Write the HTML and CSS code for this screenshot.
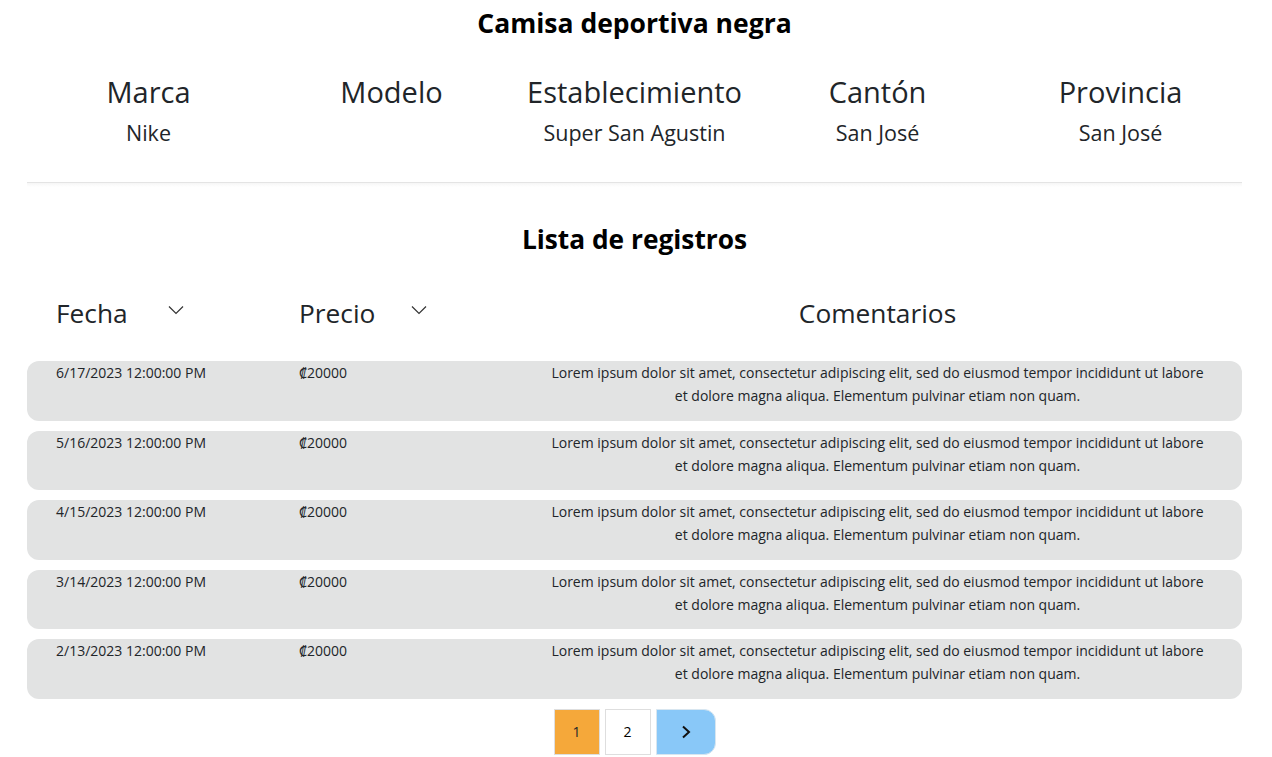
FILE: index.html
```html
<!DOCTYPE html>
<html lang="es">
<head>
<meta charset="utf-8">
<title>Camisa deportiva negra</title>
<link rel="stylesheet" href="styles.css">
</head>
<body>
<main class="page">
  <h1 class="title">Camisa deportiva negra</h1>
  <section class="info">
    <div class="info-col"><h2 class="info-label">Marca</h2><p class="info-value">Nike</p></div>
    <div class="info-col"><h2 class="info-label">Modelo</h2><p class="info-value"></p></div>
    <div class="info-col"><h2 class="info-label">Establecimiento</h2><p class="info-value">Super San Agustin</p></div>
    <div class="info-col"><h2 class="info-label">Cantón</h2><p class="info-value">San José</p></div>
    <div class="info-col"><h2 class="info-label">Provincia</h2><p class="info-value">San José</p></div>
  </section>
  <hr class="divider">
  <h1 class="title title-list">Lista de registros</h1>
  <div class="table-head">
    <div class="th th-sort"><span>Fecha</span><svg class="chev" width="16" height="10" viewBox="0 0 16 10"><path d="M1 1.5 L8 8.5 L15 1.5" fill="none" stroke="#333" stroke-width="1.2"/></svg></div>
    <div class="th th-sort"><span>Precio</span><svg class="chev" width="16" height="10" viewBox="0 0 16 10"><path d="M1 1.5 L8 8.5 L15 1.5" fill="none" stroke="#333" stroke-width="1.2"/></svg></div>
    <div class="th th-center">Comentarios</div>
  </div>
  <div class="rows">
    <div class="row"><div class="cell">6/17/2023 12:00:00 PM</div><div class="cell">₡20000</div><div class="cell cell-comment">Lorem ipsum dolor sit amet, consectetur adipiscing elit, sed do eiusmod tempor incididunt ut labore et dolore magna aliqua. Elementum pulvinar etiam non quam.</div></div>
    <div class="row"><div class="cell">5/16/2023 12:00:00 PM</div><div class="cell">₡20000</div><div class="cell cell-comment">Lorem ipsum dolor sit amet, consectetur adipiscing elit, sed do eiusmod tempor incididunt ut labore et dolore magna aliqua. Elementum pulvinar etiam non quam.</div></div>
    <div class="row"><div class="cell">4/15/2023 12:00:00 PM</div><div class="cell">₡20000</div><div class="cell cell-comment">Lorem ipsum dolor sit amet, consectetur adipiscing elit, sed do eiusmod tempor incididunt ut labore et dolore magna aliqua. Elementum pulvinar etiam non quam.</div></div>
    <div class="row"><div class="cell">3/14/2023 12:00:00 PM</div><div class="cell">₡20000</div><div class="cell cell-comment">Lorem ipsum dolor sit amet, consectetur adipiscing elit, sed do eiusmod tempor incididunt ut labore et dolore magna aliqua. Elementum pulvinar etiam non quam.</div></div>
    <div class="row"><div class="cell">2/13/2023 12:00:00 PM</div><div class="cell">₡20000</div><div class="cell cell-comment">Lorem ipsum dolor sit amet, consectetur adipiscing elit, sed do eiusmod tempor incididunt ut labore et dolore magna aliqua. Elementum pulvinar etiam non quam.</div></div>
  </div>
  <nav class="pager">
    <span class="page-btn page-active">1</span>
    <span class="page-btn">2</span>
    <span class="page-btn page-next"><svg width="12" height="14" viewBox="0 0 12 14"><path d="M3 1.5 L9 7 L3 12.5" fill="none" stroke="#111" stroke-width="2"/></svg></span>
  </nav>
</main>
</body>
</html>
```
FILE: styles.css
```css
* { box-sizing: border-box; }
body {
  margin: 0;
  background: #fff;
  font-family: "Open Sans", "Noto Sans", sans-serif;
  color: #212529;
}
.page {
  margin-left: 27px;
  width: 1215px;
}
.title {
  margin: 0;
  padding-top: 5px;
  height: 57px;
  text-align: center;
  font-size: 26.5px;
  font-weight: 700;
  line-height: 36px;
  color: #000;
}
.info {
  display: grid;
  grid-template-columns: repeat(5, 1fr);
  height: 125px;
}
.info-col { text-align: center; }
.info-label {
  margin: 0;
  font-size: 29px;
  font-weight: 500;
  line-height: 44px;
  padding-top: 13px;
}
.info-value {
  margin: 0;
  font-size: 21.5px;
  line-height: 34px;
  height: 34px;
  padding-top: 2px;
}
.divider {
  margin: 0;
  border: 0;
  border-top: 1px solid #e4e4e4;
  height: 5px;
  background: linear-gradient(#f6f6f6, #fff);
}
.title-list {
  padding-top: 34px;
  height: 102px;
  font-size: 26.3px;
}
.table-head {
  display: grid;
  grid-template-columns: 243px 243px 1fr;
  height: 72px;
  align-items: start;
  padding-top: 4px;
}
.th {
  font-size: 26.3px;
  padding-left: 29px;
  line-height: 40px;
}
.th-sort { display: flex; align-items: center; }
.th-sort span { width: 112px; }
.chev { margin-top: -6px; }
.th-center { text-align: center; padding-left: 0; }
.rows {
  display: flex;
  flex-direction: column;
  gap: 10px;
}
.row {
  display: grid;
  grid-template-columns: 243px 243px 1fr;
  background: #e2e3e3;
  border-radius: 12px;
  height: 59.5px;
  font-size: 14px;
  line-height: 23px;
}
.cell { padding-left: 29px; }
.cell-comment {
  text-align: center;
  padding: 0 33px 0 33px;
}
.pager {
  display: flex;
  justify-content: center;
  gap: 5px;
  margin-top: 10px;
}
.page-btn {
  width: 46px;
  height: 46px;
  display: flex;
  align-items: center;
  justify-content: center;
  border: 1px solid #dedede;
  font-size: 14px;
  background: #fff;
  color: #000;
}
.page-active { background: #f5a83a; color: #212529; }
.page-next {
  width: 60px;
  background: #89c8f8;
  border-color: #d8e6f0;
  border-radius: 0 12px 12px 0;
}
```
